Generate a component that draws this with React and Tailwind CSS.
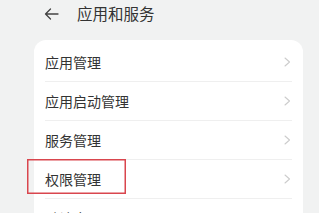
const rows = ['应用管理', '应用启动管理', '服务管理', '权限管理', '默认应用'];

const Chevron = () => (
    <svg width="7" height="10" viewBox="0 0 7 10" fill="none">
        <polyline points="1,1 5.5,5 1,9" stroke="#cccccc" strokeWidth="1.1" strokeLinecap="round" strokeLinejoin="round" />
    </svg>
);

const App = () => {
    return (
        <div
            className="w-[319px] h-[213px] overflow-hidden bg-[#f1f2f2] text-[#333333]"
            style={{ fontFamily: '"Noto Sans CJK SC", "Noto Sans", sans-serif' }}
        >
            <div className="flex items-center h-[28px] pl-[44px]">
                <svg width="15" height="12" viewBox="0 0 15 12" fill="none">
                    <path d="M14 6H1.5M6.5 1L1.5 6l5 5" stroke="#444" strokeWidth="1.3" strokeLinecap="round" strokeLinejoin="round" />
                </svg>
                <span className="ml-[18px] text-[15.5px] leading-none text-[#333]">应用和服务</span>
            </div>
            <div className="ml-[34px] mr-[16px] mt-[12px] bg-white rounded-[12px] pt-[3px]">
                {rows.map((r) => (
                    <div key={r} className="relative mx-[11px]">
                        <div className="flex items-center justify-between h-[38px] pr-[1px]">
                            <span className="text-[14px] leading-none">{r}</span>
                            <Chevron />
                        </div>
                        <div className="h-px bg-[#efefef]" />
                        {r === '权限管理' && (
                            <div className="absolute left-[-18px] top-[-1px] w-[99px] h-[35px] border-0 shadow-[inset_0_0_0_1.5px_#d9464e]" />
                        )}
                    </div>
                ))}
            </div>
        </div>
    );
};

export default App;
